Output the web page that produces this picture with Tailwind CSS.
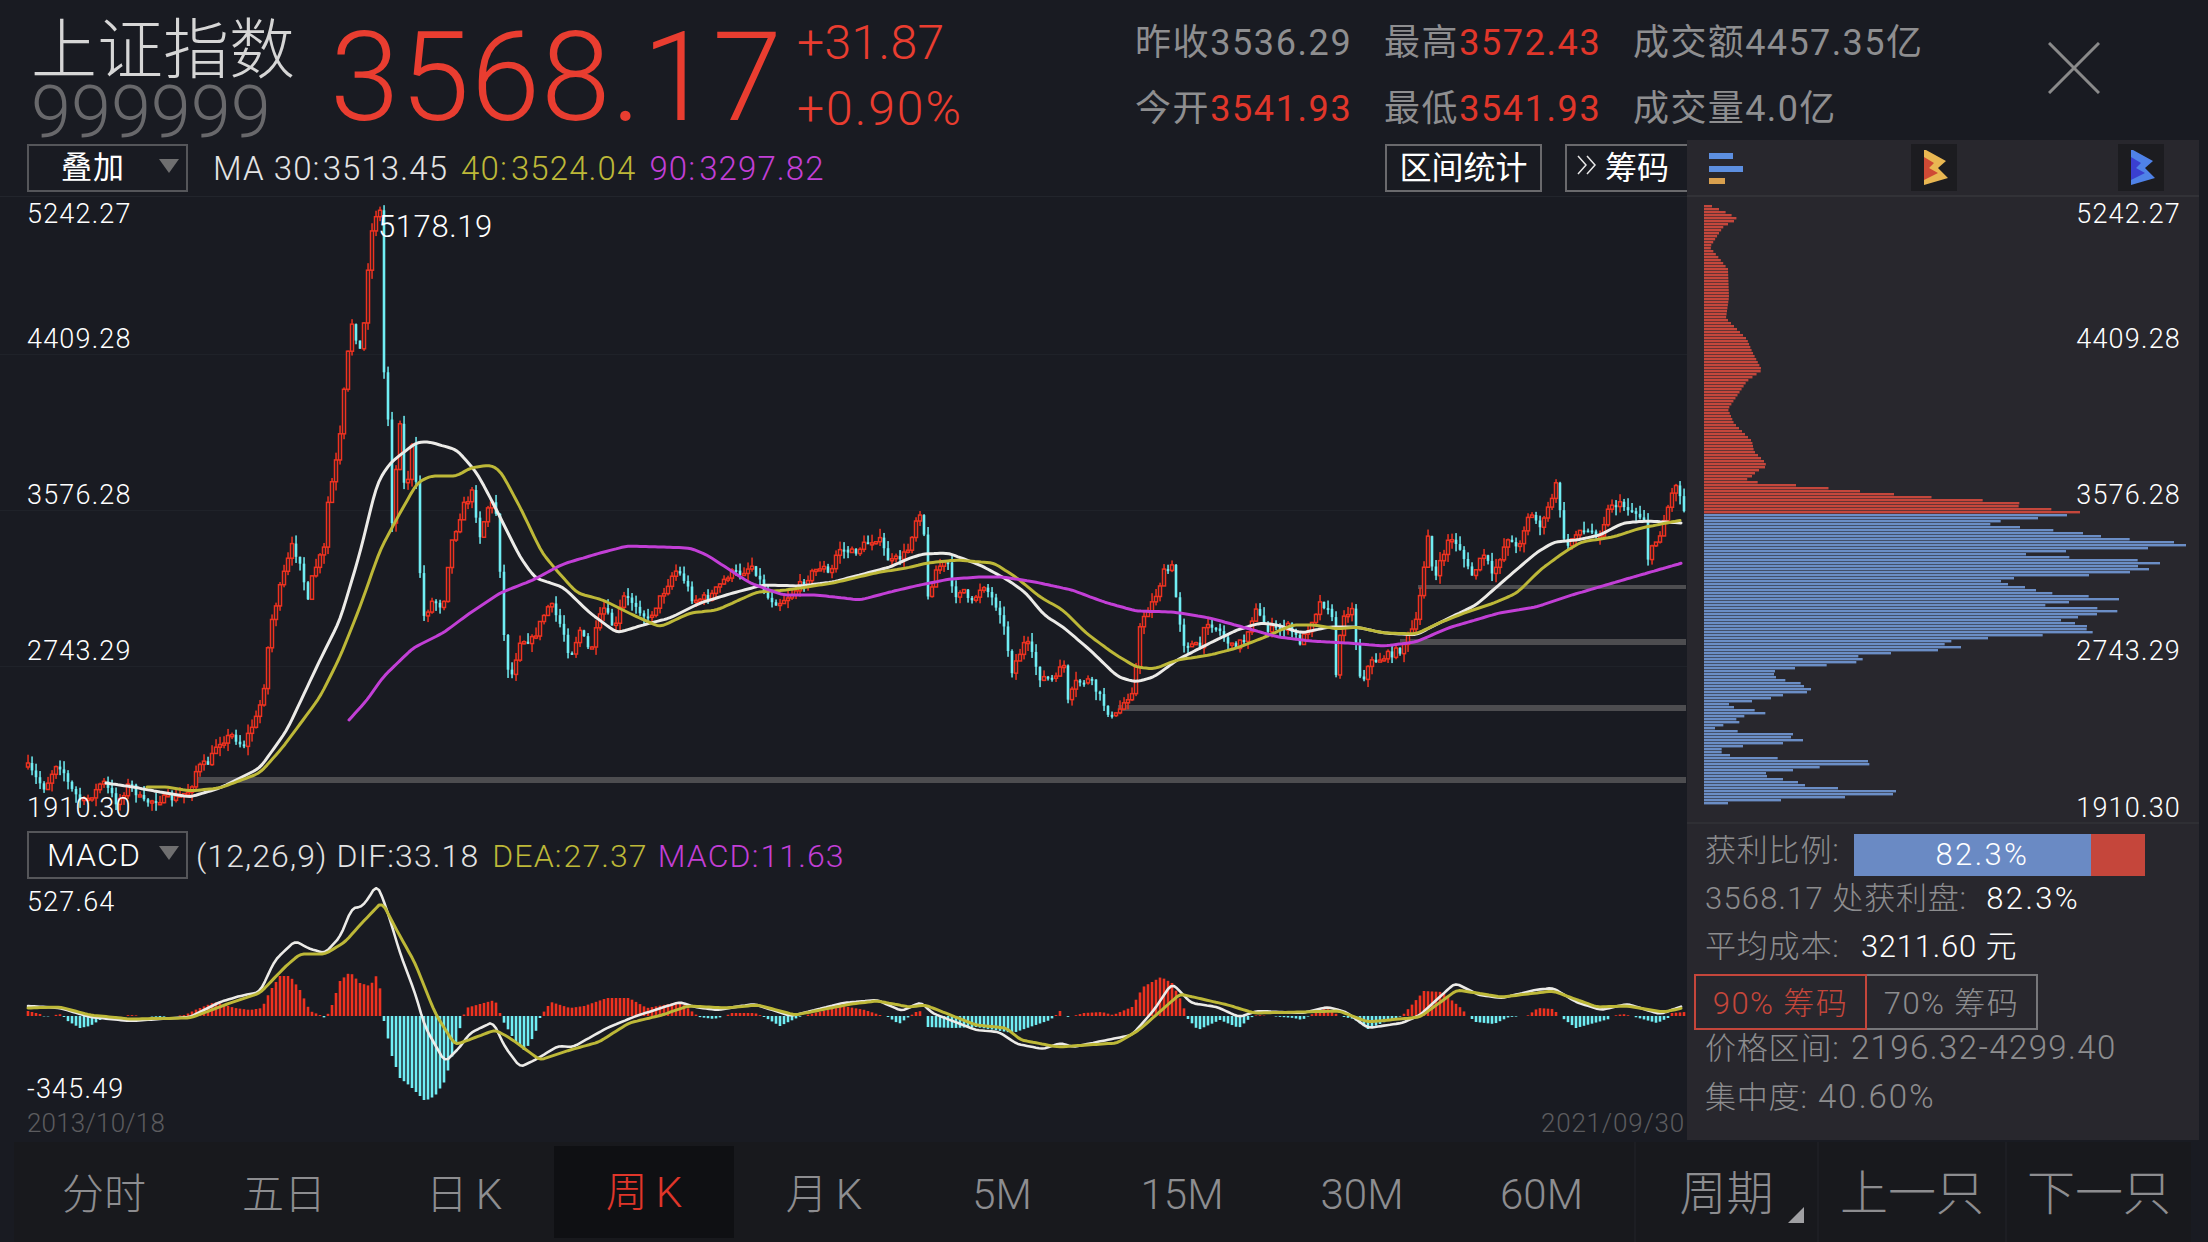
<!DOCTYPE html>
<html lang="zh-CN">
<head>
<meta charset="UTF-8">
<title>上证指数 周K</title>
<script src="https://cdn.jsdelivr.net/npm/@tailwindcss/browser@4"></script>
</head>
<body class="bg-[#191b22]">
<div class="w-[2208px] h-[1242px] overflow-hidden flex flex-col bg-[#191b22] text-white [font-family:Roboto,'Noto_Sans_CJK_SC',sans-serif]">

  <!-- quote header -->
  <div class="h-[140px] flex shrink-0">
    <div class="w-[330px] pl-[31px] pt-[17px]">
      <div class="text-[66px] leading-[68px] font-light text-[#d6d6d6]">上证指数</div>
      <div class="text-[72px] leading-[56px] font-light text-[#68686b]">999999</div>
    </div>
    <div class="w-[467px] pt-[8px] text-[125px] leading-[140px] font-light text-[#e93d30] tracking-[1px]">3568.17</div>
    <div class="w-[338px] pt-[10px] text-[48px] leading-[66px] font-light text-[#e93d30] tracking-[0.4px]">
      <div>+31.87</div>
      <div class="tracking-[2px]">+0.90%</div>
    </div>
    <div class="w-[249px] pt-[10px] text-[36px] leading-[66px] text-[#8e8e90] tracking-[1.6px]">
      <div>昨收3536.29</div>
      <div>今开<span class="text-[#e0362a]">3541.93</span></div>
    </div>
    <div class="w-[249px] pt-[10px] text-[36px] leading-[66px] text-[#8e8e90] tracking-[1.6px]">
      <div>最高<span class="text-[#e0362a]">3572.43</span></div>
      <div>最低<span class="text-[#e0362a]">3541.93</span></div>
    </div>
    <div class="w-[415px] pt-[10px] text-[36px] leading-[66px] text-[#8e8e90] tracking-[1.4px]">
      <div>成交额4457.35亿</div>
      <div>成交量4.0亿</div>
    </div>
    <div class="pt-[42px]">
      <svg width="52" height="52" viewBox="0 0 52 52"><path d="M1 1 L51 51 M51 1 L1 51" stroke="#8a8a8a" stroke-width="3" fill="none"/></svg>
    </div>
  </div>

  <div class="h-[1002px] flex shrink-0">
    <!-- charts -->
    <div class="w-[1687px] shrink-0 flex flex-col">
      <div class="h-[56px] flex items-center pl-[27px] text-[33px] tracking-[1.1px] font-light">
        <div class="w-[161px] h-[48px] border-2 border-[#55565a] flex items-center relative pl-[32px] text-[31px] font-normal">叠加
          <svg class="absolute left-[130px] top-[13px]" width="20" height="14" viewBox="0 0 20 14"><path d="M0 0 H20 L10 14 Z" fill="#6f6f70"/></svg>
        </div>
        <div class="ml-[25px] text-[#e4e4e4] pt-[2px]">MA 30:<span class="ml-[2px]">3513.45</span></div>
        <div class="ml-[13px] text-[#bdb838] pt-[2px]">40:<span class="ml-[3px]">3524.04</span></div>
        <div class="ml-[13px] text-[#c23fd6] pt-[2px]">90:<span class="ml-[3px]">3297.82</span></div>
        <div class="ml-auto w-[157px] h-[48px] border-2 border-[#6a6a6d] flex items-center justify-center text-[32px] tracking-normal font-normal">区间统计</div>
        <div class="ml-[23px] w-[122px] h-[48px] border-2 border-r-0 border-[#6a6a6d] flex items-center pl-[10px] text-[32px] tracking-normal font-normal">
          <svg class="mr-[7px] mb-[6px]" width="21" height="20" viewBox="0 0 21 20"><path d="M1 1 L9 10 L1 19 M10 1 L18 10 L10 19" stroke="#e8e8e8" stroke-width="1.5" fill="none"/></svg>筹码
        </div>
      </div>

      <div class="relative h-[628px]">
        <svg id="kline" class="absolute inset-0" width="1687" height="628" viewBox="0 196 1687 628"></svg>
        <div class="absolute left-[27px] top-[5px] text-[27px] leading-[26px] font-light tracking-[1.2px]">5242.27</div>
        <div class="absolute left-[27px] top-[130px] text-[27px] leading-[26px] font-light tracking-[1.2px]">4409.28</div>
        <div class="absolute left-[27px] top-[286px] text-[27px] leading-[26px] font-light tracking-[1.2px]">3576.28</div>
        <div class="absolute left-[27px] top-[442px] text-[27px] leading-[26px] font-light tracking-[1.2px]">2743.29</div>
        <div class="absolute left-[27px] top-[599px] text-[27px] leading-[26px] font-light tracking-[1.2px]">1910.30</div>
        <div class="absolute left-[378px] top-[18px] text-[31px] leading-[26px] font-light tracking-[0.6px]">5178.19</div>
      </div>

      <div class="h-[60px] flex items-center pl-[27px] pt-[2px] text-[32px] tracking-[1.1px] font-light">
        <div class="w-[161px] h-[48px] border-2 border-[#55565a] flex items-center relative pl-[18px] text-[32px]">MACD
          <svg class="absolute left-[130px] top-[13px]" width="20" height="14" viewBox="0 0 20 14"><path d="M0 0 H20 L10 14 Z" fill="#6f6f70"/></svg>
        </div>
        <div class="ml-[8px] text-[#e4e4e4] pt-[1px]">(12,26,9) DIF:33.18</div>
        <div class="ml-[13px] text-[#bdb838] pt-[1px]">DEA:<span class="ml-[1px]">27.37</span></div>
        <div class="ml-[10px] text-[#c23fd6] pt-[1px]">MACD:<span class="ml-[1px]">11.63</span></div>
      </div>

      <div class="relative h-[258px]">
        <svg id="macd" class="absolute inset-0" width="1687" height="258" viewBox="0 884 1687 258"></svg>
        <div class="absolute left-[27px] top-[5px] text-[27px] leading-[26px] font-light tracking-[1.2px]">527.64</div>
        <div class="absolute left-[27px] top-[192px] text-[27px] leading-[26px] font-light tracking-[1.2px]">-345.49</div>
        <div class="absolute left-[27px] top-[226px] text-[26px] leading-[26px] font-light text-[#5c5c5f] tracking-[0.2px]">2013/10/18</div>
        <div class="absolute right-[2px] top-[226px] text-[26px] leading-[26px] font-light text-[#5c5c5f] tracking-[0.8px]">2021/09/30</div>
      </div>
    </div>

    <!-- chip distribution panel -->
    <div class="w-[512px] h-[1000px] bg-[#28272d] flex flex-col shrink-0">
      <div class="h-[57px] shrink-0 border-b-2 border-[#323237] relative flex items-center">
        <svg class="ml-[22px] mt-[3px]" width="34" height="32" viewBox="0 0 34 32">
          <rect x="0" y="0" width="24" height="6" fill="#5d8fe0"/><rect x="0" y="13" width="34" height="6" fill="#5d8fe0"/><rect x="0" y="25" width="16" height="6" fill="#d9a04e"/>
        </svg>
        <svg class="ml-[168px]" width="46" height="47" viewBox="0 0 46 47">
          <rect width="46" height="47" fill="#1c1c20"/>
          <path d="M13 6 L15 6 L35 17 L27 24 L37 34 L13 41 Z" fill="#e9b752"/>
          <path d="M13 13 L23 19 L18 24 L27 29 L13 36 Z" fill="#cf4a35"/>
        </svg>
        <svg class="ml-[161px]" width="46" height="47" viewBox="0 0 46 47">
          <rect width="46" height="47" fill="#1c1c20"/>
          <path d="M13 6 L15 6 L35 17 L27 24 L37 34 L13 41 Z" fill="#4f82e8"/>
          <path d="M13 13 L23 19 L18 24 L27 29 L13 36 Z" fill="#3a3fd0"/>
        </svg>
      </div>
      <div class="relative h-[627px] shrink-0 border-b-2 border-[#2f2f34]">
        <svg id="chips" class="absolute inset-0" width="512" height="627" viewBox="1687 197 512 627"></svg>
        <div class="absolute right-[18px] top-[4px] text-[27px] leading-[26px] font-light tracking-[1.2px]">5242.27</div>
        <div class="absolute right-[18px] top-[129px] text-[27px] leading-[26px] font-light tracking-[1.2px]">4409.28</div>
        <div class="absolute right-[18px] top-[285px] text-[27px] leading-[26px] font-light tracking-[1.2px]">3576.28</div>
        <div class="absolute right-[18px] top-[441px] text-[27px] leading-[26px] font-light tracking-[1.2px]">2743.29</div>
        <div class="absolute right-[18px] top-[598px] text-[27px] leading-[26px] font-light tracking-[1.2px]">1910.30</div>
      </div>
      <div class="pl-[18px] pt-[1px] text-[31px] font-light text-[#8d8d8f] tracking-[0.8px] leading-[48px]">
        <div class="flex h-[50px] pt-[2px]">
          <div>获利比例:</div>
          <div class="ml-[14px] mt-[7px] w-[291px] h-[42px] flex text-[31px] leading-[42px] text-white tracking-[2.4px]">
            <div class="w-[237px] bg-[#6a8ac4] pl-[82px]">82.3%</div>
            <div class="w-[54px] bg-[#c5463b]"></div>
          </div>
        </div>
        <div class="h-[48px]"><span class="tracking-[1.2px]">3568.17</span> 处获利盘: <span class="ml-[11px] text-white tracking-[2.4px]">82.3%</span></div>
        <div class="h-[48px]">平均成本: <span class="ml-[13px] text-white">3211.60 元</span></div>
        <div class="flex h-[56px] -ml-[11px] mt-[3px] text-[31px] tracking-[1.4px]">
          <div class="w-[173px] h-[56px] border-2 border-[#c5463b] text-[#c5463b] flex items-center justify-center pt-[4px]">90% 筹码</div>
          <div class="w-[171px] h-[56px] border-2 border-l-0 border-[#77777a] flex items-center justify-center pt-[4px]">70% 筹码</div>
        </div>
        <div class="h-[49px] -mt-[6px]">价格区间: <span class="ml-[3px] text-[33px] tracking-[1.4px]">2196.32-4299.40</span></div>
        <div class="h-[49px]">集中度: <span class="ml-[2px] text-[33px] tracking-[2px]">40.60%</span></div>
      </div>
    </div>
  </div>

  <!-- period tabs -->
  <div class="h-[100px] ml-[14px] w-[2177px] bg-[#18191d] flex text-[#8d8d90] text-[42px] font-light shrink-0">
    <div class="w-[180px] flex items-center justify-center pt-[4px]">分时</div>
    <div class="w-[180px] flex items-center justify-center pt-[4px]">五日</div>
    <div class="w-[180px] flex items-center justify-center pt-[4px]">日<span class="ml-[8px]">K</span></div>
    <div class="w-[180px] h-[92px] mt-[4px] bg-[#0f1013] text-[#e0362a] flex items-center justify-center">周<span class="ml-[8px]">K</span></div>
    <div class="w-[180px] flex items-center justify-center pt-[4px]">月<span class="ml-[8px]">K</span></div>
    <div class="w-[180px] flex items-center justify-center pt-[4px] pr-[4px]">5M</div>
    <div class="w-[180px] flex items-center justify-center pt-[4px] pr-[4px]">15M</div>
    <div class="w-[180px] flex items-center justify-center pt-[4px] pr-[4px]">30M</div>
    <div class="w-[180px] flex items-center justify-center pt-[4px] pr-[5px]">60M</div>
    <div class="w-[183px] border-l-2 border-[#1d1e23] relative flex items-center justify-center pt-[4px] text-[47px]">周期
      <svg class="absolute left-[152px] top-[65px]" width="16" height="16" viewBox="0 0 16 16"><path d="M16 0 V16 H0 Z" fill="#a0a0a3"/></svg>
    </div>
    <div class="w-[188px] border-l-2 border-[#1d1e23] flex items-center justify-center pt-[4px] text-[48px]">上一只</div>
    <div class="w-[186px] border-l-2 border-[#1d1e23] flex items-center justify-center pt-[4px] text-[48px]">下一只</div>
  </div>
</div>

<script>
  // everything below is traced from the chart, in page pixels
  const closes = [28,767,37,780,45,788,57,762,63,770,70,788,83,803,97,790,102,780,117,803,130,783,143,803,153,800,177,798,190,790,197,768,210,762,217,743,233,735,243,747,250,730,258,715,265,680,270,627,277,600,283,577,292,547,300,560,308,603,313,573,325,547,328,503,337,457,342,423,345,377,352,323,362,357,365,307,370,240,377,210,381,212,382,337,385,390,390,437,392,520,400,420,405,500,413,440,417,500,422,620,433,600,443,607,450,547,463,507,472,493,480,535,490,500,498,517,502,620,510,683,520,640,533,640,543,617,550,603,563,630,570,657,580,630,590,653,603,607,615,630,623,597,635,603,648,620,663,593,675,570,683,577,693,600,710,597,730,573,740,573,753,565,767,597,778,603,793,593,810,575,822,565,830,577,838,548,853,553,867,543,878,537,890,563,907,553,918,512,923,510,927,603,932,583,937,567,948,563,953,597,963,587,970,607,983,583,987,590,1001,613,1012,670,1026,640,1040,677,1056,680,1063,653,1067,705,1076,683,1090,680,1113,720,1134,687,1141,620,1154,600,1164,573,1173,567,1177,607,1184,643,1200,647,1207,620,1219,630,1232,647,1244,640,1255,610,1269,630,1288,627,1301,643,1320,603,1331,607,1336,673,1343,613,1352,610,1361,683,1370,663,1384,657,1400,650,1416,623,1421,590,1428,533,1434,583,1448,540,1458,543,1471,577,1485,553,1492,577,1508,537,1517,550,1529,513,1542,527,1552,497,1557,483,1565,550,1577,530,1600,533,1611,503,1627,507,1646,520,1648,558,1660,533,1671,497,1676,483,1684,510];
  const ma30 = [106,783,133,787,160,792,190,797,220,788,260,768,287,730,320,660,340,620,360,553,377,483,390,463,417,442,430,442,457,450,477,473,493,503,500,517,520,557,535,578,563,587,590,613,617,633,643,625,670,618,700,603,733,593,763,585,800,586,833,582,890,567,910,558,923,554,948,553,980,565,1008,580,1026,593,1044,615,1063,627,1090,650,1118,677,1136,682,1154,677,1177,660,1210,643,1237,630,1260,623,1278,625,1301,633,1329,627,1356,627,1384,633,1416,635,1439,623,1476,605,1508,577,1536,553,1554,542,1577,540,1600,535,1623,523,1646,521,1682,523];
  const ma40 = [147,787,167,787,190,791,220,788,260,773,283,747,320,697,340,657,360,607,380,550,400,513,417,483,430,476,457,476,470,468,490,465,500,470,520,507,542,553,558,572,577,593,603,600,633,615,660,627,690,613,717,610,757,592,787,590,833,583,880,572,907,568,927,563,957,560,980,562,994,563,1017,578,1040,597,1063,610,1086,633,1113,653,1136,667,1154,669,1177,660,1210,655,1237,648,1265,637,1292,625,1315,625,1338,629,1356,627,1384,633,1416,634,1439,623,1467,612,1494,603,1517,593,1540,570,1563,553,1581,542,1613,537,1641,528,1682,520];
  const ma90 = [349,720,367,700,383,677,413,648,443,633,470,613,500,593,533,580,563,564,600,553,627,546,660,547,690,548,707,555,733,572,750,583,783,595,817,595,860,600,890,592,920,585,950,579,980,577,1003,577,1035,582,1072,590,1104,602,1136,611,1173,612,1210,618,1246,628,1278,637,1311,641,1347,643,1384,646,1416,642,1448,628,1499,613,1536,607,1572,595,1623,580,1682,563];
  const hist = [28,5,40,2,45,-1,55,1,62,2,66,-4,80,-12,90,-10,100,-4,110,-1,130,1,160,-1,185,1,195,6,215,14,235,8,250,6,262,8,270,25,280,40,290,40,300,26,310,5,320,1,325,-2,330,5,340,35,350,44,360,33,370,30,378,43,381,20,384,-5,392,-40,400,-62,410,-70,425,-85,435,-80,445,-65,455,-30,462,-5,466,8,480,12,495,16,500,3,503,-5,515,-25,525,-35,535,-18,540,-2,545,6,551,14,570,8,584,10,607,18,629,18,647,8,680,14,694,3,699,-1,714,-3,725,0,732,3,755,3,762,0,766,-2,780,-10,799,-1,814,3,843,10,865,6,880,1,888,-1,899,-8,910,0,919,6,924,0,928,-11,954,-12,976,-11,1013,-17,1050,-4,1055,0,1060,5,1064,0,1067,-1,1073,0,1084,3,1102,4,1113,1,1132,9,1143,29,1161,39,1172,33,1183,12,1186,-1,1189,-4,1198,-14,1220,-4,1239,-12,1250,-2,1257,1,1294,-2,1302,-4,1309,0,1324,9,1335,3,1339,0,1354,-3,1368,-13,1387,-5,1402,0,1424,25,1442,24,1461,8,1468,0,1476,-6,1494,-8,1509,-1,1527,0,1538,8,1553,7,1561,-1,1576,-12,1609,-3,1612,0,1623,2,1635,-1,1657,-7,1668,-2,1672,3,1685,4];
  const dif = [28,1006,60,1008,90,1017,130,1021,190,1017,220,1002,240,996,260,992,275,960,295,941,310,949,325,953,340,937,352,908,362,907,372,893,377,883,388,913,400,953,415,993,425,1027,445,1062,460,1047,470,1033,493,1022,505,1047,520,1067,535,1060,540,1057,558,1046,573,1047,607,1028,636,1016,680,1002,695,1007,717,1010,754,1004,791,1016,843,1003,877,1000,902,1011,921,1002,932,1013,976,1030,999,1032,1017,1044,1043,1049,1061,1043,1073,1047,1102,1041,1132,1035,1154,1010,1172,983,1191,1003,1217,1007,1239,1017,1257,1011,1302,1013,1328,1007,1346,1012,1368,1028,1402,1023,1420,1015,1455,983,1479,995,1502,998,1535,990,1553,988,1576,1002,1601,1010,1627,1004,1660,1014,1683,1006];
  const dea = [28,1008,60,1007,90,1015,130,1019,190,1018,230,1003,260,993,285,967,300,954,325,954,345,942,360,925,382,902,395,927,415,963,435,1013,455,1045,495,1030,510,1038,540,1060,570,1050,599,1042,629,1023,662,1015,688,1006,725,1008,758,1005,795,1015,851,1004,877,1001,910,1007,925,1005,976,1025,1006,1028,1021,1040,1058,1047,1117,1043,1139,1030,1180,994,1228,1005,1254,1013,1302,1012,1339,1011,1368,1022,1420,1017,1457,990,1502,997,1553,991,1597,1007,1627,1006,1664,1012,1683,1008];
  const chips = [205,8,208,15,213,26,218,34,225,20,232,15,246,6,258,16,268,24,296,25,317,22,338,43,350,48,369,58,380,43,408,24,422,30,440,48,450,50,455,55,460,60,465,63,470,53,475,48,480,40,483,81,486,114,490,156,493,190,497,240,500,298,503,324,506,310,509,366,512,381,515,354,518,324,521,283,524,288,527,330,530,359,533,389,536,401,539,438,542,486,545,480,548,426,551,330,554,318,557,389,560,456,563,456,566,423,569,456,572,411,575,372,578,279,581,306,584,303,587,330,590,333,593,356,596,399,599,423,602,336,605,344,608,418,611,411,614,384,617,369,620,351,623,381,626,384,629,382,632,392,635,312,638,270,641,236,644,243,647,264,650,219,653,171,656,146,659,165,662,146,665,111,668,81,671,66,674,72,677,72,680,86,683,102,686,99,689,111,692,99,695,69,698,66,701,39,704,18,707,36,710,58,713,63,716,29,719,34,722,36,725,11,728,11,731,45,734,111,737,75,740,111,743,63,746,27,749,13,752,20,755,29,758,96,761,198,764,149,767,99,770,84,773,51,776,69,779,84,782,99,785,102,788,150,791,213,794,177,797,123,800,54,803,9];

  const NS = 'http://www.w3.org/2000/svg';
  function add(svg, tag, attrs) {
    const el = document.createElementNS(NS, tag);
    for (const k in attrs) el.setAttribute(k, attrs[k]);
    svg.appendChild(el);
  }
  function at(pts, x) {
    if (x <= pts[0]) return pts[1];
    for (let i = 2; i < pts.length; i += 2) {
      if (x <= pts[i]) {
        const t = (x - pts[i - 2]) / (pts[i] - pts[i - 2]);
        return pts[i - 1] + (pts[i + 1] - pts[i - 1]) * t;
      }
    }
    return pts[pts.length - 1];
  }
  function line(svg, pts, color, width, smooth) {
    let p = [];
    for (let x = pts[0]; x <= pts[pts.length - 2]; x += 3) p.push([x, at(pts, x)]);
    for (let n = 0; n < smooth; n++) {
      p = p.map((q, i) => i === 0 || i === p.length - 1 ? q : [q[0], (p[i - 1][1] + q[1] + p[i + 1][1]) / 3]);
    }
    add(svg, 'polyline', { points: p.map(q => q[0] + ',' + q[1].toFixed(1)).join(' '), fill: 'none', stroke: color, 'stroke-width': width, 'stroke-linejoin': 'round', 'stroke-linecap': 'round' });
  }
  let seed = 7;
  function rnd() { seed = (seed * 16807) % 2147483647; return seed / 2147483647; }

  const RED = '#ee3220', CYAN = '#70eef4', BG = '#191b22';
  const k = document.getElementById('kline');
  [354, 510, 666].forEach(y => add(k, 'rect', { x: 0, y, width: 1687, height: 1, fill: '#1f2229' }));
  add(k, 'rect', { x: 0, y: 196, width: 1687, height: 1, fill: '#22252c' });
  add(k, 'rect', { x: 1418, y: 585, width: 268, height: 4, fill: '#4d4d50' });
  add(k, 'rect', { x: 1400, y: 639, width: 286, height: 6, fill: '#4d4d50' });
  add(k, 'rect', { x: 1118, y: 705, width: 568, height: 6, fill: '#4d4d50' });
  add(k, 'rect', { x: 198, y: 777, width: 1488, height: 6, fill: '#4d4d50' });

  let prev = closes[1];
  for (let x = 28; x <= 1684; x += 4) {
    const c = at(closes, x) + (rnd() - 0.5) * 8;
    const top = Math.min(prev, c), bot = Math.max(prev, c);
    const hi = Math.max(top - rnd() * 9, 198), lo = bot + rnd() * 9;
    const up = c < prev;
    const col = up ? RED : CYAN;
    add(k, 'rect', { x: x - 0.7, y: hi, width: 1.5, height: lo - hi, fill: col });
    if (up) add(k, 'rect', { x: x - 1.5, y: top, width: 3, height: Math.max(bot - top, 2), fill: BG, stroke: col, 'stroke-width': 1.5 });
    else add(k, 'rect', { x: x - 1.3, y: top, width: 2.6, height: Math.max(bot - top, 2), fill: col });
    prev = c;
  }
  line(k, ma30, '#ecebe8', 3, 2);
  line(k, ma40, '#bdb838', 3, 2);
  line(k, ma90, '#c23fd6', 3, 2);

  const m = document.getElementById('macd');
  for (let x = 28; x <= 1684; x += 4) {
    const h = at(hist, x);
    if (Math.abs(h) < 0.4) continue;
    add(m, 'rect', { x: x - 1.3, y: h > 0 ? 1016 - h : 1016, width: 2.6, height: Math.abs(h), fill: h > 0 ? RED : CYAN });
  }
  line(m, dif, '#ecebe8', 2.6, 1);
  line(m, dea, '#bdb838', 3, 1);

  const ch = document.getElementById('chips');
  for (let y = 205; y <= 803; y += 3) {
    const w = at(chips, y);
    const isAvg = y === 575;
    add(ch, 'rect', { x: 1704, y, width: w, height: isAvg ? 3 : 2.4, fill: isAvg ? '#d9a04e' : y < 514 ? '#c5473c' : '#6b8ec6' });
  }
</script>
</body>
</html>
